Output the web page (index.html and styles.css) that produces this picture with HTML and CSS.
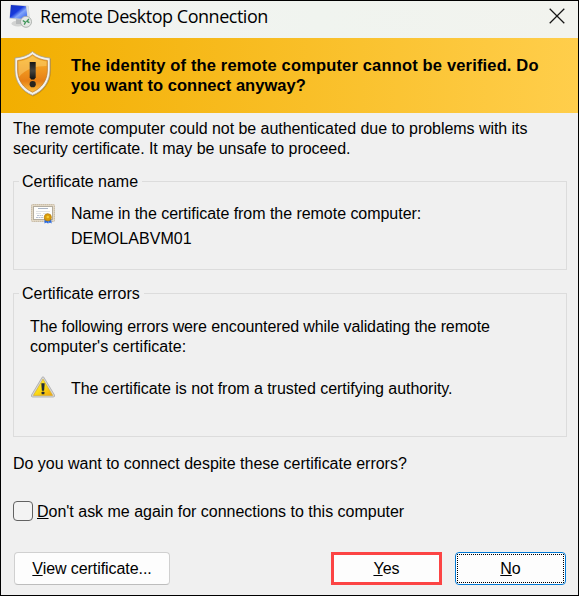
FILE: index.html
```html
<!DOCTYPE html>
<html lang="en">
<head>
<meta charset="utf-8">
<title>Remote Desktop Connection</title>
<link rel="stylesheet" href="styles.css">
</head>
<body>
<main class="dialog">
  <header class="titlebar">
    <svg class="app-icon" width="24" height="25" viewBox="0 0 24 25">
      <defs>
        <linearGradient id="screen" x1="0" y1="0" x2="1" y2="1">
          <stop offset="0" stop-color="#1633bd"/><stop offset=".42" stop-color="#1739dc"/><stop offset=".6" stop-color="#82a5fa"/><stop offset="1" stop-color="#2856e8"/>
        </linearGradient>
      </defs>
      <ellipse cx="10" cy="20.500" rx="6.500" ry="3" fill="#d2d3d2"/>
      <path d="M8 15l7 2v4H8z" fill="#b7b9ba"/>
      <path d="M2.500 1.500l18 1.300 1.500 15-20.500-2z" fill="#c5c9d1"/>
      <path d="M3 2l15 1.200 1.700 13L1.800 14.700z" fill="url(#screen)"/>
      <path d="M18.500 3l1.700.3 1.500 13.500-2-.3z" fill="#dfe2e4"/>
      <circle cx="18" cy="18.800" r="5.500" fill="#e6e8e6" stroke="#a7aba8" stroke-width=".9"/>
      <path d="M14.800 17.500l2.700 1.800-1.300 2.400M20.900 16l-2 2.200 2.500 1.400" fill="none" stroke="#43975b" stroke-width="1.400"/>
    </svg>
    <h1 class="title">Remote Desktop Connection</h1>
    <svg class="close" width="16" height="16" viewBox="0 0 16 16"><path d="M.7.7l14.600 14.600M15.300.7L.7 15.300" stroke="#161616" stroke-width="1.250"/></svg>
  </header>

  <section class="banner">
    <svg class="shield" width="40" height="48" viewBox="0 0 40 48">
      <defs>
        <linearGradient id="gold" x1="0" y1="0" x2="0" y2="1">
          <stop offset="0" stop-color="#f8b326"/><stop offset=".45" stop-color="#ef941e"/><stop offset=".7" stop-color="#e67f15"/><stop offset="1" stop-color="#ffc13d"/>
        </linearGradient>
        <linearGradient id="mark" x1="0" y1="0" x2="0" y2="1">
          <stop offset="0" stop-color="#151515"/><stop offset=".5" stop-color="#45433d"/><stop offset="1" stop-color="#111"/>
        </linearGradient>
      </defs>
      <path d="M20 2.500C16 6 9 8.300 2.500 8.700v12C2.500 32 9 42 20 46.500 31 42 38 32 38 20.700v-12C31 8.300 24 6 20 2.500z" fill="#a46b12" opacity=".5"/>
      <path d="M19.500 1.500C15.500 5.200 9 7.600 2 8v12C2 31.500 8.500 41 19.500 45.300 30.500 41 37 31.500 37 20V8C30 7.600 23.500 5.200 19.500 1.500z" fill="#f4f2eb" stroke="#a4a096" stroke-width=".8"/>
      <path d="M19.500 4.700C15.500 7.900 10.500 9.900 4.600 10.500V20c0 10 5.400 18 14.900 22.200C29 38 34.400 30 34.400 20v-9.500C28.500 9.900 23.500 7.900 19.500 4.700z" fill="url(#gold)" stroke="#bd7926" stroke-width=".7"/>
      <path d="M5.500 11.500C12 10.500 16 9 19.500 6 23 9 28 11 33.500 11.500V16C23 16 12 19 6 27 5.200 22 5.500 17 5.500 11.500z" fill="#ffe18a" opacity=".4"/>
      <path d="M16.700 12h6v15.500l-1.500 2h-3l-1.500-2z" fill="url(#mark)"/>
      <circle cx="19.700" cy="34.200" r="3.100" fill="#29251e"/>
    </svg>
    <p class="banner-text">The identity of the remote computer cannot be verified. Do<br><span class="second">you want to connect anyway?</span></p>
  </section>

  <div class="content">
    <p class="intro">The remote computer could not be authenticated due to problems with its<br>security certificate. It may be unsafe to proceed.</p>

    <fieldset class="group name-group">
      <legend>Certificate name</legend>
      <div class="row">
        <svg class="cert" width="24" height="20" viewBox="0 0 24 20">
          <rect x=".5" y=".5" width="23" height="17" rx="1" fill="#e0d5c1" stroke="#c9bda8"/>
          <rect x="1" y="1" width="22" height="16" fill="none" stroke="#e8dfcf" stroke-dasharray="1 1"/>
          <rect x="2.500" y="2.500" width="19" height="13" fill="#fdfdfc" stroke="#b3ac9e"/>
          <path d="M7 4.500h10" stroke="#a9b4c5"/>
          <path d="M5 7.500h14M5 9.500h5M12 9.500h5" stroke="#e0e2e5"/>
          <path d="M6 11.500h6M5 13.500h7" stroke="#b8c2d5" stroke-dasharray="2 .5"/>
          <path d="M13.500 14H17v5.500l-1.800-1-1.700 1zM17.300 14H20l.7 5.500-1.700-1-1.700 1z" fill="#2869df"/>
          <circle cx="16.800" cy="13.300" r="3.600" fill="#d99c0d" stroke="#b67c0b" stroke-width=".7"/>
          <circle cx="16.800" cy="13" r="1.300" fill="#f4ca35"/>
        </svg>
        <div class="details"><p>Name in the certificate from the remote computer:</p><p class="host">DEMOLABVM01</p></div>
      </div>
    </fieldset>

    <fieldset class="group error-group">
      <legend>Certificate errors</legend>
      <p class="following"><span class="tight">The following errors were encountered while validating the remote</span><br>computer's certificate:</p>
      <div class="row error-row">
        <svg class="warning" width="24" height="22" viewBox="0 0 24 22">
          <defs><linearGradient id="warn" x1="0" y1="0" x2="1" y2="1"><stop offset="0" stop-color="#fff45c"/><stop offset=".5" stop-color="#fbdc14"/><stop offset="1" stop-color="#f0a510"/></linearGradient></defs>
          <path d="M12.800 1.200L23.500 19q.6 2-1.200 2H1.700Q-.1 21 .5 19L11.200 1.200q.8-.9 1.600 0z" fill="#d7d7d5" stroke="#a8a8a8" stroke-width=".8"/>
          <path d="M12 3.200L21.600 19.400H2.400z" fill="url(#warn)" stroke="#d5a51b" stroke-width=".6"/>
          <path d="M10.300 7.200h3.400l-.6 7.500h-2.200z" fill="#222b35"/><rect x="10.600" y="15.700" width="2.800" height="2.500" rx=".5" fill="#222b35"/>
        </svg>
        <p>The certificate is not from a trusted certifying authority.</p>
      </div>
    </fieldset>

    <p class="question">Do you want to connect despite these certificate errors?</p>
    <label class="remember"><input type="checkbox"><span><u>D</u>on't ask me again for connections to this computer</span></label>
    <footer class="actions">
      <button class="btn view"><u>V</u>iew certificate...</button>
      <button class="btn yes"><u>Y</u>es</button>
      <button class="btn no"><span class="focus"><u>N</u>o</span></button>
    </footer>
  </div>
</main>
</body>
</html>
```

FILE: styles.css
```css
* { box-sizing: border-box; }
body { margin: 0; }
p, h1 { margin: 0; }

.dialog {
  width: 579px;
  height: 596px;
  border: 1px solid #000;
  background: #f0f0f0;
  color: #000;
  font: 16px/20px "Liberation Sans", Arial, sans-serif;
  white-space: nowrap;
  overflow: hidden;
}

.titlebar {
  display: flex;
  height: 37px;
  padding: 2px 13px 0 7px;
  background: linear-gradient(90deg, #f3f3f2, #f0f4ef 55%, #f2f3ee);
}
.title {
  margin: 1px 0 0 8px;
  font: 400 18px/24px "Open Sans", "Noto Sans", sans-serif;
  letter-spacing: -.48px;
}
.close { margin: 5px 0 0 auto; }

.banner {
  display: flex;
  height: 75px;
  padding: 12px 0 0 12px;
  background: linear-gradient(90deg, #f2ae00, #ffce4b);
}
.banner-text { margin: 5px 0 0 18px; font-size: 16.5px; font-weight: 700; letter-spacing: .16px; }
.second { letter-spacing: .04px; }

.content { padding: 6px 11px 0 12px; }
.intro { height: 53px; letter-spacing: -.045px; }

.group {
  min-width: 0;
  margin: 0;
  padding: 0 0 0 16px;
  border: 1px solid #dcdcdc;
}
.group legend { margin-left: -11px; padding: 0 4px 0 3px; height: 19px; letter-spacing: -.03px; }
.name-group { height: 98px; margin-bottom: 14px; }
.error-group { height: 153px; }
.row { display: flex; letter-spacing: -.04px; }
.name-group .row { padding-top: 13px; }
.cert { margin-left: 1px; margin-right: 16px; }
.host { margin-top: 5px; letter-spacing: .06px; }
.following { margin-top: 14px; letter-spacing: .05px; }
.tight { letter-spacing: -.11px; }
.error-row { margin-top: 20px; }
.warning { margin: -1px 16px 0 1px; }
.error-row p { margin-top: 2px; }

.question { margin-top: 17px; letter-spacing: -.02px; }
.remember { display: flex; align-items: center; margin-top: 28px; letter-spacing: -.01px; }
.remember input {
  appearance: none;
  position: relative;
  top: -1px;
  width: 20px;
  height: 20px;
  margin: 0 4px 0 0;
  border: 1px solid #626262;
  border-radius: 4px;
  background: #f3f3f3;
}

u {
  text-decoration: underline;
  text-decoration-thickness: 1px;
  text-underline-offset: 1px;
  text-decoration-skip-ink: none;
}

.actions { display: flex; margin: 30px 0 0 1px; }
.btn {
  height: 33px;
  padding: 0;
  border: 1px solid #d0d0d0;
  border-radius: 4px;
  background: #fdfdfd;
  color: #000;
  font: inherit;
}
.view { width: 156px; border-bottom-color: #bdbdbd; letter-spacing: -.07px; }
.yes { width: 111px; margin-left: 161px; border: 3px solid #fc4444; border-radius: 0; }
.no { width: 111px; margin-left: 13px; padding: 1px; border-color: #0078d4; }
.focus { display: block; height: 29px; border: 1px dotted #000; line-height: 27px; }
```
